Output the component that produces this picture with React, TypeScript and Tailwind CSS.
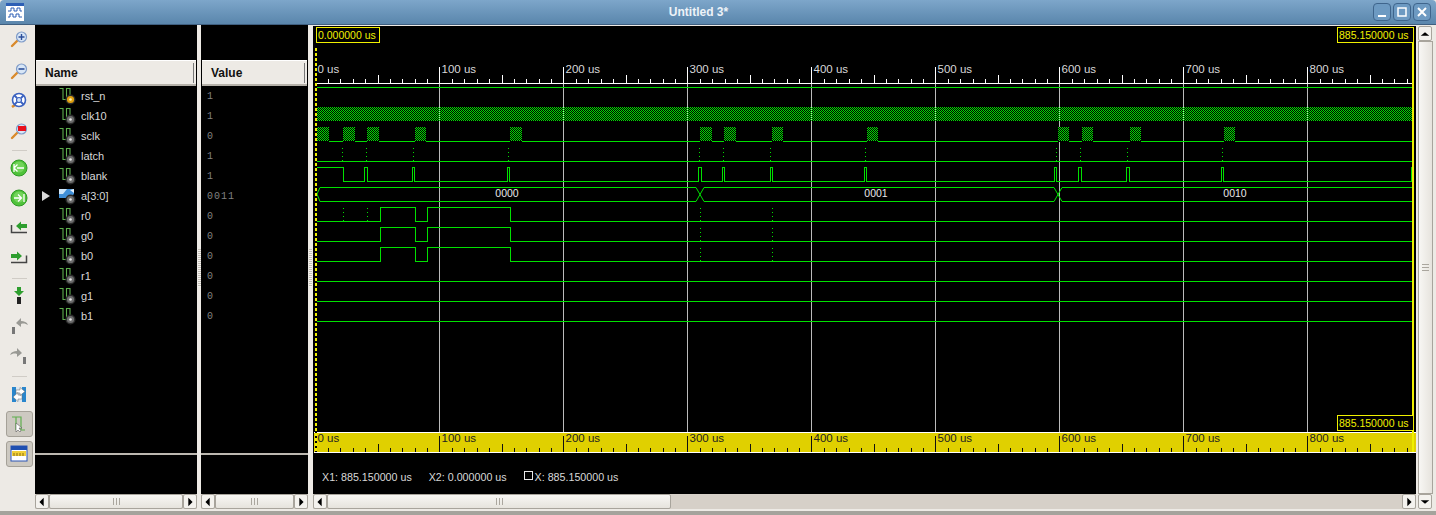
import type { ReactNode } from "react";

const signals = [
  { name: "rst_n", value: "1", kind: "reset" },
  { name: "clk10", value: "1", kind: "wire" },
  { name: "sclk", value: "0", kind: "wire" },
  { name: "latch", value: "1", kind: "wire" },
  { name: "blank", value: "1", kind: "wire" },
  { name: "a[3:0]", value: "0011", kind: "bus" },
  { name: "r0", value: "0", kind: "wire" },
  { name: "g0", value: "0", kind: "wire" },
  { name: "b0", value: "0", kind: "wire" },
  { name: "r1", value: "0", kind: "wire" },
  { name: "g1", value: "0", kind: "wire" },
  { name: "b1", value: "0", kind: "wire" },
];

const GREEN = "#00e000";
const majors = [0, 1, 2, 3, 4, 5, 6, 7, 8];
const majorX = (i: number) => 315.5 + i * 124;
const sclkBursts = [
  [317, 329], [343, 355], [367, 379], [415, 426], [510, 522], [700, 712], [724, 736],
  [772, 783], [867, 878], [1058, 1069], [1082, 1093], [1130, 1141], [1224, 1235],
];
const latchDots = [342, 366, 413, 508, 699, 723, 770, 865, 1056, 1080, 1127, 1222];
const blankPulses = [
  [364, 367], [412, 414], [507, 509], [698, 701], [722, 724], [770, 772], [864, 866],
  [1054, 1056], [1078, 1081], [1126, 1129], [1221, 1223], [1411, 1412],
];

function SignalIcon({ kind }: { kind: string }) {
  const disc = kind === "reset" ? "#e0a010" : "#6e6e6e";
  return (
    <svg width="18" height="20" viewBox="0 0 18 20" className="shrink-0">
      {kind === "bus" ? (
        <>
          <path d="M0 3h15v5l-4 4H0z" fill="#3f8fd8" />
          <path d="M0 3h8l-4 5H0z" fill="#cfe6fa" />
          <path d="M11 4l4 3v-4z" fill="#e8f2fb" />
        </>
      ) : (
        <path d="M0.5 2.5h3.5v11h3.5v-11h3.5v9" fill="none" stroke="#5fae4f" strokeWidth="1.1" />
      )}
      <circle cx="11.5" cy="13.5" r="5" fill="#2c2c2c" />
      <circle cx="11.5" cy="13.5" r="3.6" fill={disc} />
      <circle cx="11.5" cy="13.5" r="1.3" fill={kind === "reset" ? "#fff3b0" : "#e4e4e4"} />
    </svg>
  );
}

function Lens({ children }: { children?: ReactNode }) {
  return (
    <svg width="24" height="24" viewBox="0 0 24 24">
      <path d="M10 15l-5 5" stroke="#d98a2b" strokeWidth="2.4" strokeLinecap="round" />
      <circle cx="14.5" cy="11" r="5" fill="#d8e6f6" stroke="#7f9cc8" strokeWidth="1.2" />
      {children}
    </svg>
  );
}

function RoundArrow({ flip }: { flip?: boolean }) {
  return (
    <svg width="24" height="24" viewBox="0 0 24 24">
      <circle cx="12" cy="12" r="8" fill="#4fc23a" stroke="#2f9a26" />
      <circle cx="12" cy="11" r="5.5" fill="#8be070" opacity="0.6" />
      <path
        d={flip ? "M7 12h7M11 8.5l3.5 3.5-3.5 3.5M17 8v8" : "M10 12h7M10.5 8.5L7 12l3.5 3.5M7 8v8"}
        fill="none"
        stroke="#fff"
        strokeWidth="1.3"
      />
    </svg>
  );
}

function StepIcon({ right }: { right?: boolean }) {
  return (
    <svg width="24" height="24" viewBox="0 0 24 24">
      {right ? (
        <>
          <path d="M4 16.5h15.5v-7" fill="none" stroke="#444" strokeWidth="1.5" />
          <path d="M15 10l-5-4.5V8H4v4h6v2.5z" fill="#2e9e2e" />
        </>
      ) : (
        <>
          <path d="M4.5 9v7.5H20" fill="none" stroke="#444" strokeWidth="1.5" />
          <path d="M9 10l5-4.5V8h6v4h-6v2.5z" fill="#2e9e2e" />
        </>
      )}
    </svg>
  );
}

function ToolIcons() {
  return (
    <div className="flex w-[30px] shrink-0 flex-col items-center pt-[1px] pr-[2px]">
      <Lens>
        <path d="M11.5 11h6M14.5 8v6" stroke="#2c4f9a" strokeWidth="1.4" />
      </Lens>
      <div className="mt-[8px]">
        <Lens>
          <path d="M11.5 11h6" stroke="#2c4f9a" strokeWidth="1.6" />
        </Lens>
      </div>
      <div className="mt-[6px]">
        <svg width="24" height="24" viewBox="0 0 24 24">
          <path d="M8 17l-3 2" stroke="#d98a2b" strokeWidth="2.5" />
          <circle cx="12" cy="12" r="6.5" fill="#fff" stroke="#3b62c0" strokeWidth="1.6" />
          <circle cx="12" cy="12" r="2.5" fill="#cfe0f5" stroke="#3b62c0" strokeWidth="1.2" />
          <path d="M7.5 7.5l2.5 2.5M16.5 7.5L14 10M7.5 16.5l2.5-2.5M16.5 16.5L14 14" stroke="#3b62c0" strokeWidth="1.8" />
        </svg>
      </div>
      <div className="mt-[6px]">
        <Lens>
          <rect x="11" y="8" width="8" height="5" fill="#e8101c" />
        </Lens>
      </div>
      <div className="mt-[8px] h-px w-[15px] bg-[#d0ccc6]" />
      <div className="mt-[5px]">
        <RoundArrow />
      </div>
      <div className="mt-[6px]">
        <RoundArrow flip />
      </div>
      <div className="mt-[6px]">
        <StepIcon />
      </div>
      <div className="mt-[6px]">
        <StepIcon right />
      </div>
      <div className="mt-[8px] h-px w-[15px] bg-[#d0ccc6]" />
      <div className="mt-[5px]">
        <svg width="24" height="24" viewBox="0 0 24 24">
          <path d="M10 3h4v4h3l-5 5-5-5h3z" fill="#2e9e2e" />
          <rect x="10" y="13" width="4" height="7" fill="#222" />
        </svg>
      </div>
      <div className="mt-[6px]">
        <svg width="24" height="24" viewBox="0 0 24 24">
          <rect x="5" y="13" width="3" height="7" fill="#777" />
          <path d="M9 9l5-5v3c3 0 6 1 7 4-2-1-4-2-7-1v3z" fill="#999994" />
        </svg>
      </div>
      <div className="mt-[6px]">
        <svg width="24" height="24" viewBox="0 0 24 24">
          <rect x="16" y="13" width="3" height="7" fill="#777" />
          <path d="M15 9l-5-5v3c-3 0-6 1-7 4 2-1 4-2 7-1v3z" fill="#999994" />
        </svg>
      </div>
      <div className="mt-[8px] h-px w-[15px] bg-[#d0ccc6]" />
      <div className="mt-[5px]">
        <svg width="24" height="24" viewBox="0 0 24 24">
          <rect x="5" y="5" width="4" height="15" fill="#2a86cc" />
          <rect x="15" y="5" width="4" height="15" fill="#2a86cc" />
          <rect x="9" y="5" width="6" height="15" fill="#dbe6ee" />
          <path d="M9 8h4V5.5l5 4-5 4V11H9zM15 13h-4v-2.5l-5 4.5 5 4.5V17h4z" fill="#fff" stroke="#666" strokeWidth="0.5" />
        </svg>
      </div>
      <div className="mt-[5px] flex h-[26px] w-[27px] items-center justify-center rounded-[3px] border border-[#a5a198] bg-[#cdc9c1]">
        <svg width="20" height="20" viewBox="0 0 20 20">
          <path d="M3 3h4v13M7 3h5v13h4" fill="none" stroke="#5fae4f" strokeWidth="1.2" />
          <path d="M7 9v9l2-2 2 2 1-1-2-3h3z" fill="#fff" stroke="#444" strokeWidth="0.5" />
        </svg>
      </div>
      <div className="mt-[4px] flex h-[26px] w-[27px] items-center justify-center rounded-[3px] border border-[#a5a198] bg-[#cdc9c1]">
        <svg width="18" height="18" viewBox="0 0 18 18">
          <rect x="1" y="1" width="16" height="15" fill="#fff" stroke="#2a55b5" />
          <rect x="1" y="1" width="16" height="4" fill="#1f4fb0" />
          <rect x="2" y="6" width="14" height="5" fill="#f0cf3a" />
          <path d="M4 8v3M7 8v3M10 8v3M13 8v3" stroke="#8a6d10" />
        </svg>
      </div>
    </div>
  );
}

function ArrowBtn({ dir }: { dir: "left" | "right" | "up" | "down" }) {
  const path = {
    left: "M9 2v10L4 7z",
    right: "M5 2v10l5-5z",
    up: "M2 9h10L7 5z",
    down: "M2 5h10L7 9z",
  }[dir];
  return (
    <div className="flex h-[15px] w-[14px] shrink-0 items-center justify-center rounded-[2px] border border-[#a8a49c] bg-[#f4f2ee]">
      <svg width="12" height="12" viewBox="0 0 14 14">
        <path d={path} fill="#000" />
      </svg>
    </div>
  );
}

function Grip() {
  return (
    <div className="flex gap-[2px]">
      <div className="h-[7px] w-px bg-[#aaa69e]" />
      <div className="h-[7px] w-px bg-[#aaa69e]" />
      <div className="h-[7px] w-px bg-[#aaa69e]" />
    </div>
  );
}

function HScroll({ thumb }: { thumb?: number }) {
  return (
    <div className="flex h-[15px] items-center bg-[#d6d0c8]">
      <ArrowBtn dir="left" />
      {thumb ? (
        <>
          <div
            className="flex h-[15px] items-center justify-center rounded-[2px] border border-[#a8a49c] bg-gradient-to-b from-[#f8f7f4] to-[#e6e3dd]"
            style={{ width: thumb }}
          >
            <Grip />
          </div>
          <div className="flex-1" />
        </>
      ) : (
        <div className="flex h-[15px] flex-1 items-center justify-center rounded-[2px] border border-[#a8a49c] bg-gradient-to-b from-[#f8f7f4] to-[#e6e3dd]">
          <Grip />
        </div>
      )}
      <ArrowBtn dir="right" />
    </div>
  );
}

// one pixel checker as filled squares, dashes did not stay crisp
function Hatch({ x, w, y, h }: { x: number; w: number; y: number; h: number }) {
  let d = "";
  for (let r = 0; r < h; r++) {
    for (let c = (x + r) % 2; c < w; c += 2) {
      d += `M${x + c} ${y + r}h1v1h-1z`;
    }
  }
  return <path d={d} fill={GREEN} />;
}

function Ruler({ y, color, label }: { y: number; color: string; label: string }) {
  const ticks = [];
  for (let i = 1; i < 89; i++) {
    if (i % 10 === 0) continue;
    const x = Math.round(315.5 + i * 12.4) + 0.5;
    ticks.push(<path key={i} d={`M${x} ${y - (i % 5 === 0 ? 8 : 4)}V${y}`} stroke={color} />);
  }
  return (
    <g>
      {ticks}
      {majors.map((i) => (
        <g key={i}>
          <text x={majorX(i) + 2} y={y - 10} fontSize="11.5" fill={label} fontFamily="Liberation Sans">
            {i * 100} us
          </text>
          {i > 0 && <path d={`M${majorX(i)} ${y - 16}V${y}`} stroke={color} />}
        </g>
      ))}
    </g>
  );
}

function TimeBox({ x, y, w, text }: { x: number; y: number; w: number; text: string }) {
  return (
    <g>
      <rect x={x + 0.5} y={y + 0.5} width={w} height={15} fill="#000" stroke="#f0f000" />
      <text x={x + 2} y={y + 12} fontSize="10.5" fill="#f0f000" fontFamily="Liberation Sans">
        {text}
      </text>
    </g>
  );
}

function Waves() {
  const rgb = (hi: number) => {
    const lo = hi + 14;
    return `M316 ${lo}H380V${hi}H415V${lo}H427V${hi}H510V${lo}H1412`;
  };
  const blank = `M316 167.5H343V181.5` + blankPulses.map(([a, b]) => `H${a}V167.5H${b}V181.5`).join("") + "H1412";
  const dots = (x: number, y1: number, y2: number) => (
    <path key={`${x}-${y1}`} d={`M${x}.5 ${y1}V${y2}`} stroke={GREEN} strokeDasharray="1 3" />
  );

  return (
    <svg width="1103" height="427" viewBox="313 26 1103 427" shapeRendering="crispEdges" className="block">
      <rect x="313" y="26" width="1103" height="427" fill="#000" />

      {majors.slice(1).map((i) => (
        <path key={i} d={`M${majorX(i)} 83V432`} stroke="#bbbbbb" />
      ))}

      <path d="M316 83.5H1412" stroke="#fff" />
      <Ruler y={83} color="#fff" label="#d8d8d8" />

      {[87.5, 161.5, 281.5, 301.5, 321.5].map((y) => (
        <path key={y} d={`M316 ${y}H1412`} stroke={GREEN} />
      ))}
      <Hatch x={317} w={1095} y={107} h={14} />

      <path d="M316 141.5H1412" stroke={GREEN} />
      {sclkBursts.map(([a, b]) => (
        <g key={a}>
          <rect x={a} y={127} width={b - a} height={15} fill="#000" />
          <Hatch x={a} w={b - a} y={127} h={14} />
        </g>
      ))}

      {latchDots.map((x) => dots(x, 148, 161))}
      <path d={blank} fill="none" stroke={GREEN} />

      <path
        d="M317 194L320 187.5H696L704 201.5H1054L1062 187.5H1412M317 194L320 201.5H696L704 187.5H1054L1062 201.5H1412"
        fill="none"
        stroke={GREEN}
        shapeRendering="auto"
      />
      {[
        [507, "0000"],
        [876, "0001"],
        [1235, "0010"],
      ].map(([x, t]) => (
        <text
          key={t}
          x={x}
          y={197}
          textAnchor="middle"
          fontSize="10.5"
          fill="#e8e8e8"
          fontFamily="Liberation Sans"
          shapeRendering="auto"
        >
          {t}
        </text>
      ))}

      <path d={rgb(207.5)} fill="none" stroke={GREEN} />
      <path d={rgb(227.5)} fill="none" stroke={GREEN} />
      <path d={rgb(247.5)} fill="none" stroke={GREEN} />
      {dots(343, 208, 221)}
      {dots(367, 208, 221)}
      {[700, 772].flatMap((x) => [dots(x, 208, 221), dots(x, 228, 241), dots(x, 248, 261)])}

      <rect x="314" y="433" width="1102" height="19" fill="#e0d000" />
      <path d="M314 432.5H1416M314 452.5H1416" stroke="#fff" />
      <Ruler y={452} color="#111" label="#222" />

      <path d="M316 46V452" stroke="#f0f000" strokeWidth="2" />
      <path d="M316 46V452" stroke="#000" strokeWidth="2" strokeDasharray="2 3" />
      <path d="M1413 42V452" stroke="#f0f000" strokeWidth="2" />

      <TimeBox x={316} y={27} w={63} text="0.000000 us" />
      <TimeBox x={1337} y={27} w={76} text="885.150000 us" />
      <TimeBox x={1337} y={415} w={76} text="885.150000 us" />
    </svg>
  );
}

function HeaderCell({ label }: { label: string }) {
  return (
    <div className="mx-px flex h-[26px] items-center border-t border-b-2 border-t-white border-b-[#b5b1a9] bg-[#edeae5] pr-[2px] text-[12px] font-bold text-[#111]">
      <span className="flex-1 pl-[9px]">{label}</span>
      <div className="h-[20px] w-px bg-[#777]" />
    </div>
  );
}

function Splitter({ width }: { width: string }) {
  return (
    <div className={`flex items-center justify-center ${width}`}>
      <div className="h-[38px] w-[3px] bg-[repeating-linear-gradient(to_bottom,#c4c0b8_0,#c4c0b8_1px,#f6f4f0_1px,#f6f4f0_2px)]" />
    </div>
  );
}

export default function App() {
  return (
    <div className="flex h-[515px] w-[1436px] flex-col overflow-hidden bg-[#edeae5] font-['Liberation_Sans',sans-serif]">
      <div className="flex h-[25px] shrink-0 items-center rounded-t-[4px] border-b border-[#3f5f80] bg-gradient-to-b from-[#7da6ca] to-[#5a86ac] pr-[5px] pl-[6px]">
        <svg width="18" height="18" viewBox="0 0 18 18" className="shrink-0">
          <rect width="18" height="18" fill="#fff" />
          <rect width="18" height="3" fill="#2c5fb5" />
          <path d="M2 8h3V5h3v3h3V5h3v3h2M2 14h2v-3h3v3h3v-3h3v3h3" fill="none" stroke="#2c5fb5" />
        </svg>
        <div className="flex-1 text-center text-[12px] font-bold text-[#eef3f8]">Untitled 3*</div>
        <div className="flex gap-[2px]">
          {["min", "max", "close"].map((b) => (
            <div
              key={b}
              className="flex h-[18px] w-[18px] items-center justify-center rounded-[4px] border border-[#3f658c] bg-[#6d9ac2]"
            >
              <svg width="12" height="12" viewBox="0 0 12 12">
                {b === "min" && <rect x="2" y="9" width="8" height="2" fill="#fff" />}
                {b === "max" && <rect x="2" y="2" width="8" height="8" fill="none" stroke="#fff" strokeWidth="1.5" />}
                {b === "close" && <path d="M2 2l8 8M10 2l-8 8" stroke="#fff" strokeWidth="2" />}
              </svg>
            </div>
          ))}
        </div>
      </div>

      <div className="flex h-[485px] pl-[5px]">
        <ToolIcons />

        <div className="flex w-[162px] flex-col pb-px">
          <div className="flex flex-1 flex-col bg-black">
            <div className="h-[35px]" />
            <HeaderCell label="Name" />
            {signals.map((s) => (
              <div key={s.name} className="flex h-[20px] items-center">
                <div className="flex w-[24px] justify-start pl-[6px]">
                  {s.kind === "bus" && (
                    <svg width="10" height="12" viewBox="0 0 10 12">
                      <path d="M1 1l8 5-8 5z" fill="#d8d8d8" />
                    </svg>
                  )}
                </div>
                <SignalIcon kind={s.kind} />
                <span className="ml-[4px] text-[11px] text-[#d8d8d8]">{s.name}</span>
              </div>
            ))}
          </div>
          <div className="h-[41px] border-t-2 border-[#bcb8b0] bg-black" />
          <HScroll />
        </div>

        <Splitter width="w-[4px]" />

        <div className="flex w-[107px] flex-col pb-px">
          <div className="flex flex-1 flex-col bg-black">
            <div className="h-[35px]" />
            <HeaderCell label="Value" />
            {signals.map((s) => (
              <div
                key={s.name}
                className="flex h-[20px] items-center pl-[6px] font-['Liberation_Mono',monospace] text-[10px] tracking-[1px] text-[#808080]"
              >
                {s.value}
              </div>
            ))}
          </div>
          <div className="h-[41px] border-t-2 border-[#bcb8b0] bg-black" />
          <HScroll />
        </div>

        <Splitter width="w-[5px]" />

        <div className="flex w-[1103px] flex-col pt-px pb-px">
          <Waves />
          <div className="flex flex-1 items-center gap-[17px] bg-black pt-[8px] pl-[9px] text-[10.7px] text-[#d8d8d8]">
            <span>X1: 885.150000 us</span>
            <span>X2: 0.000000 us</span>
            <span className="flex items-center gap-[2px]">
              <span className="mb-[4px] h-[9px] w-[9px] border border-[#e8e8e8]" />
              X: 885.150000 us
            </span>
          </div>
          <HScroll thumb={344} />
        </div>

        <div className="ml-[2px] flex w-[15px] flex-col pt-px pb-px">
          <ArrowBtn dir="up" />
          <div className="flex flex-1 items-center justify-center border border-[#a8a49c] bg-gradient-to-r from-[#f8f7f4] to-[#e6e3dd]">
            <div className="flex flex-col gap-[2px]">
              <div className="h-px w-[7px] bg-[#aaa69e]" />
              <div className="h-px w-[7px] bg-[#aaa69e]" />
              <div className="h-px w-[7px] bg-[#aaa69e]" />
            </div>
          </div>
          <ArrowBtn dir="down" />
        </div>
      </div>

      <div className="mt-[1px] flex-1 border-t-2 border-[#a4a39c] bg-[#a4a39c]" />
    </div>
  );
}
